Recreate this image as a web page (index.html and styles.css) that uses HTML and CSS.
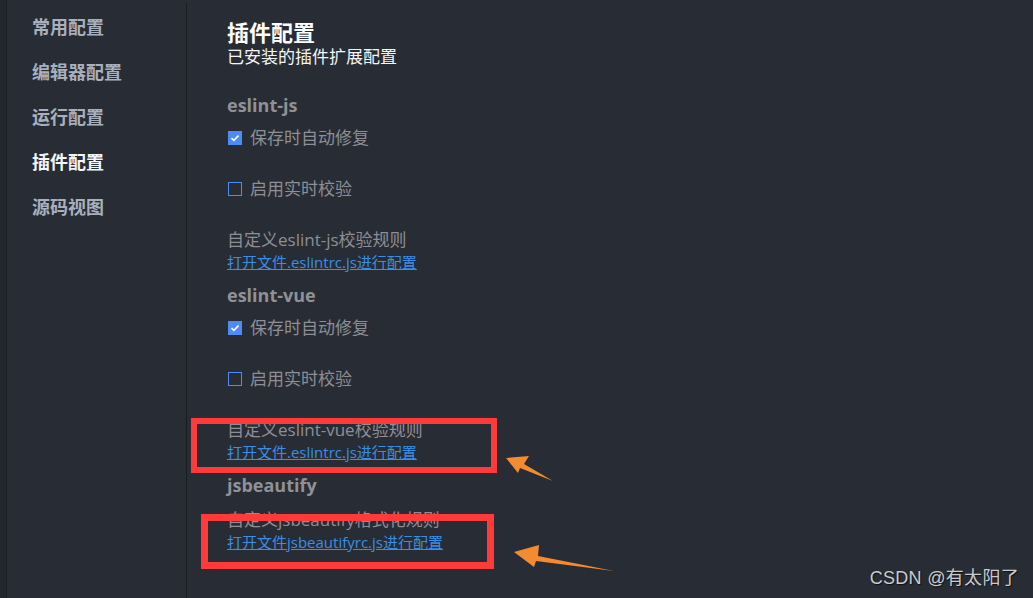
FILE: index.html
```html
<!DOCTYPE html>
<html lang="zh">
<head>
<meta charset="utf-8">
<link rel="stylesheet" href="styles.css">
</head>
<body>
<div class="app">
  <div class="edge"></div>
  <nav class="sidebar">
    <div class="nav-item">常用配置</div>
    <div class="nav-item">编辑器配置</div>
    <div class="nav-item">运行配置</div>
    <div class="nav-item active">插件配置</div>
    <div class="nav-item">源码视图</div>
  </nav>
  <main class="main">
    <h1 class="title">插件配置</h1>
    <div class="subtitle">已安装的插件扩展配置</div>

    <section class="plugin first">
      <h2 class="plugin-name">eslint-js</h2>
      <label class="check-row"><span class="box checked"><svg viewBox="0 0 14 14"><path d="M3.5 7.1 L5.9 9.3 L10.5 4.6" fill="none" stroke="#fff" stroke-width="1.6"/></svg></span>保存时自动修复</label>
      <label class="check-row gap"><span class="box"></span>启用实时校验</label>
      <div class="rule gap">自定义eslint-js校验规则</div>
      <a class="link">打开文件.eslintrc.js进行配置</a>
    </section>

    <section class="plugin">
      <h2 class="plugin-name">eslint-vue</h2>
      <label class="check-row"><span class="box checked"><svg viewBox="0 0 14 14"><path d="M3.5 7.1 L5.9 9.3 L10.5 4.6" fill="none" stroke="#fff" stroke-width="1.6"/></svg></span>保存时自动修复</label>
      <label class="check-row gap"><span class="box"></span>启用实时校验</label>
      <div class="rule gap">自定义eslint-vue校验规则</div>
      <a class="link">打开文件.eslintrc.js进行配置</a>
    </section>

    <section class="plugin">
      <h2 class="plugin-name">jsbeautify</h2>
      <div class="rule near">自定义jsbeautify格式化规则</div>
      <a class="link">打开文件jsbeautifyrc.js进行配置</a>
    </section>
  </main>
</div>

<div class="mark mark-1"></div>
<div class="mark mark-2"></div>
<svg class="arrows" width="1033" height="598" viewBox="0 0 1033 598">
  <polygon points="506,458 529,456 524,464 553,481 520,468 518,473" fill="#f58b30"/>
  <polygon points="514,552 539,545 538,556 614,571 536,561 534,567" fill="#f58b30"/>
</svg>
<div class="watermark">CSDN @有太阳了</div>
</body>
</html>
```

FILE: styles.css
```css
* { box-sizing: border-box; }
html, body {
  margin: 0;
  padding: 0;
  width: 1033px;
  height: 598px;
  overflow: hidden;
  background: #282c34;
  font-family: "Open Sans", "Noto Sans CJK SC", sans-serif;
}
.app {
  display: flex;
  height: 598px;
}
.edge {
  width: 7px;
  background: #23262d;
  border-right: 1px solid #1d2026;
}
.sidebar {
  width: 180px;
  margin-top: 3px;
  border-right: 1px solid #1a1c21;
  padding: 12px 0 0 25px;
  display: flex;
  flex-direction: column;
  gap: 23px;
}
.nav-item {
  font-family: "Noto Sans CJK SC", sans-serif;
  font-size: 18px;
  font-weight: 700;
  line-height: 22px;
  color: #a9b0bd;
}
.nav-item.active { color: #f2f4f7; }
.main {
  flex: 1;
  padding: 16px 0 0 40px;
}
.title {
  margin: 0;
  font-family: "Noto Sans CJK SC", sans-serif;
  font-size: 22px;
  font-weight: 700;
  line-height: 30px;
  color: #ffffff;
}
.subtitle {
  font-family: "Noto Sans CJK SC", sans-serif;
  font-size: 17px;
  line-height: 20px;
  color: #f4f4f4;
}
.plugin { display: flex; flex-direction: column; align-items: flex-start; margin-top: 11px; }
.plugin.first { margin-top: 28px; }
.plugin-name {
  margin: 0 0 11px;
  font-size: 18px;
  font-weight: 700;
  line-height: 22px;
  color: #8f9196;
}
.check-row {
  display: flex;
  align-items: center;
  gap: 8px;
  font-size: 17px;
  line-height: 22px;
  color: #8d8f94;
}
.gap { margin-top: 29px; }
.near { margin-top: 2px; }
.box {
  width: 14px;
  height: 14px;
  margin-left: 1px;
  border: 1.5px solid #4d8cf6;
  display: inline-flex;
}
.box.checked { background: #4d8cf6; border: none; }
.box svg { width: 14px; height: 14px; }
.rule {
  font-size: 17px;
  line-height: 22px;
  color: #8d8f94;
}
.link {
  font-size: 15px;
  line-height: 22px;
  color: #3a8ee6;
  text-decoration: underline;
}
.mark {
  position: absolute;
  border: 6px solid #ff3a3a;
}
.mark-1 { left: 191px; top: 418px; width: 306px; height: 55px; }
.mark-2 { left: 201px; top: 514px; width: 293px; height: 55px; border-width: 7px; }
.arrows { position: absolute; left: 0; top: 0; pointer-events: none; }
.watermark {
  position: absolute;
  right: 14px;
  top: 567px;
  font-family: "Liberation Sans", "Noto Sans CJK SC", sans-serif;
  font-size: 18px;
  letter-spacing: 0.3px;
  line-height: 22px;
  color: #c9cbcf;
  text-shadow: 1px 1px 1px #111;
}
```
